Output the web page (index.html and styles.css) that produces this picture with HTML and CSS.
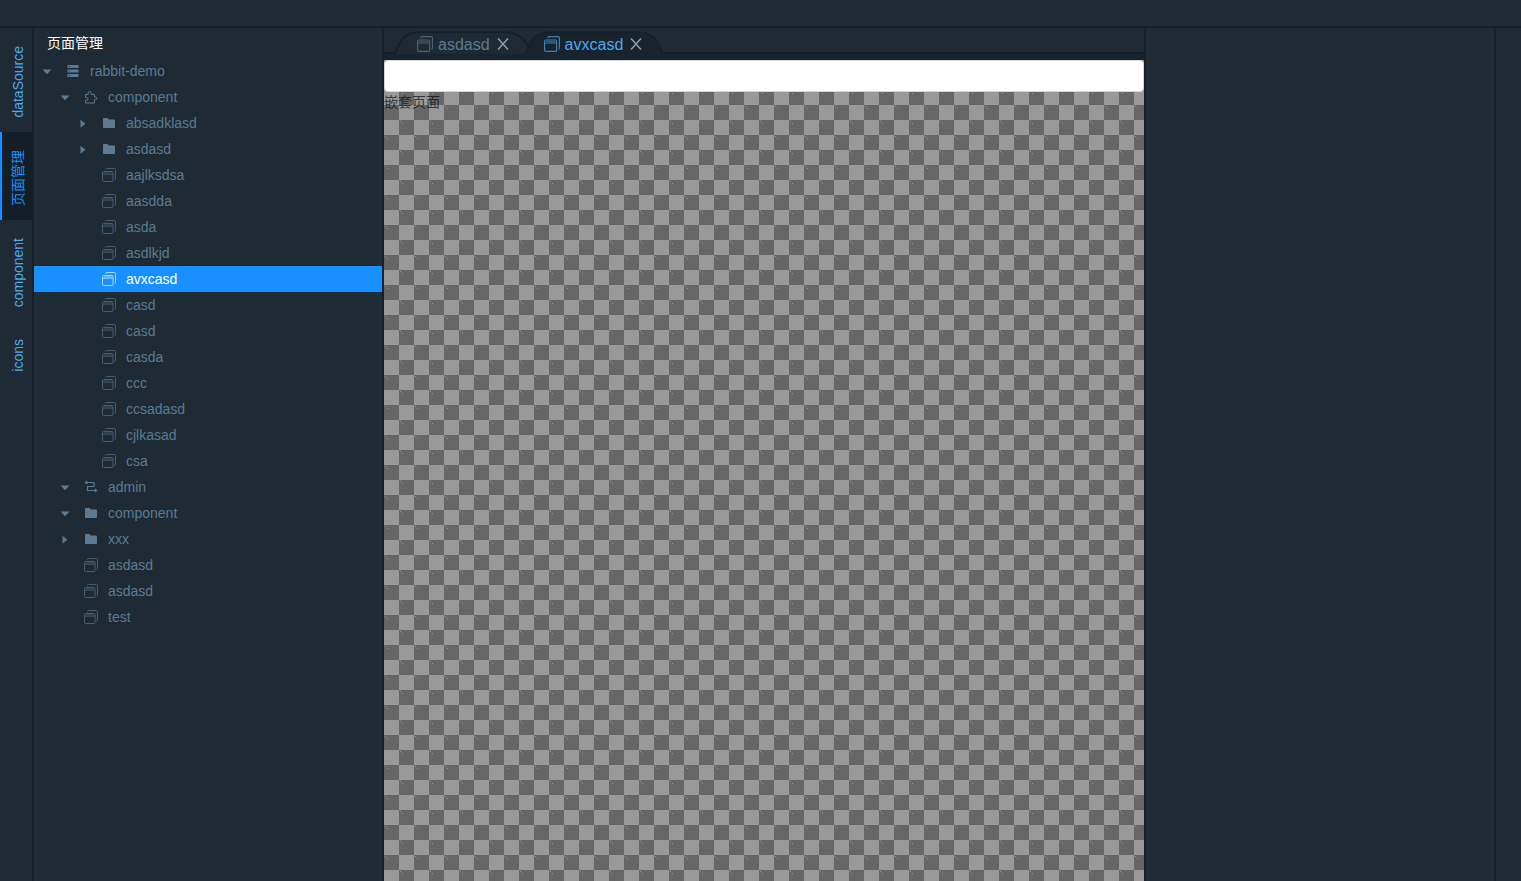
FILE: index.html
```html
<!DOCTYPE html>
<html lang="zh">
<head>
<meta charset="utf-8">
<title>页面管理</title>
<link rel="stylesheet" href="styles.css">
</head>
<body>
<svg class="defs" width="0" height="0">
  <symbol id="page" viewBox="0 0 14 14"><g fill="none" stroke="currentColor"><rect x=".5" y="3.5" width="10.5" height="10" rx="1"/><path d="M.5 6.1H11M3.5 2V1.4Q3.5.5 4.5.5H12.5Q13.5.5 13.5 1.5V10.5Q13.5 11.5 12.500 11.500"/><path d="M2 4.8h8" stroke-width=".6"/></g></symbol>
  <symbol id="folder" viewBox="0 0 14 14"><path fill="currentColor" d="M1 3q0-1 1-1h3.5L7 3.500h5q1 0 1 1V11q0 1-1 1H2q-1 0-1-1z"/></symbol>
  <symbol id="server" viewBox="0 0 14 14"><path fill="currentColor" fill-rule="evenodd" d="M1.5 1h11v3h-11zM3 2v1h1V2zM1.500 5.500h11v3h-11zM3 6.500v1h1v-1zM1.500 10h11v3h-11zM3 11v1h1v-1z"/></symbol>
  <symbol id="puzzle" viewBox="0 0 14 14"><path fill="none" stroke="currentColor" d="M1.500 4.500H4.200V3a1.500 1.500 0 0 1 3 0V4.500H10.500V7h1a1.300 1.300 0 0 1 0 2.600h-1v3.400H1.500V10.300H2.700a1.300 1.300 0 0 0 0-2.700H1.500z"/></symbol>
  <symbol id="flow" viewBox="0 0 14 14"><g fill="none" stroke="currentColor" stroke-width="1.200"><circle cx="2.500" cy="2.500" r="1"/><path d="M3.500 2.500h6.500v4H3.500v4H11.500M10.800 9L12.500 10.500l-1.700 1.500"/></g></symbol>
  <symbol id="down" viewBox="0 0 14 14"><path fill="currentColor" d="M2.500 5.500h9L7 10.200z"/></symbol>
  <symbol id="right" viewBox="0 0 14 14"><path fill="currentColor" d="M4.500 3.700v8L9.500 7.700z"/></symbol>
</svg>
<div class="app">
  <header class="topbar"></header>
  <main class="workspace">
    <nav class="rail">
      <div class="rail-tab"><span>dataSource</span></div>
      <div class="rail-tab active"><span>页面管理</span></div>
      <div class="rail-tab"><span>component</span></div>
      <div class="rail-tab"><span>icons</span></div>
    </nav>
    <aside class="explorer">
      <h1 class="title">页面管理</h1>
      <div class="tree" id="tree"></div>
    </aside>
    <section class="editor">
      <div class="tabs">
        <svg class="tab-shapes" width="760" height="32">
          <path class="baseline" d="M0 25H12M278 25H760"/>
          <path class="strip" d="M0 26H760V32H0z"/>
          <path class="tab-idle" d="M11 25.500C14 21 16 4 37 4H120C141 4 145 21 148 25.500"/>
          <path class="tab-current" d="M141.500 26C145 19 147 4 168 4H252C273 4 276 19 279 26"/>
        </svg>
        <div class="tab"><svg class="tab-icon"><use href="#page"/></svg><span>asdasd</span><svg class="close" viewBox="0 0 12 12"><path d="M1 .5l10 11M11 .5L1 11.500"/></svg></div>
        <div class="tab current"><svg class="tab-icon"><use href="#page"/></svg><span>avxcasd</span><svg class="close" viewBox="0 0 12 12"><path d="M1 .5l10 11M11 .5L1 11.500"/></svg></div>
      </div>
      <div class="canvas">
        <input class="field" type="text">
        <div class="nested">嵌套页面</div>
      </div>
    </section>
    <aside class="inspector"></aside>
    <div class="right-rail"></div>
  </main>
</div>
<script src="tree.js"></script>
</body>
</html>
```
FILE: styles.css
```css
* { box-sizing: border-box; }
body { margin: 0; background: #1e2b35; font: 14px/20px "Liberation Sans", "Noto Sans CJK SC", sans-serif; color: #5c7a91; overflow: hidden; }
svg { flex: none; display: block; }
.defs { position: absolute; }
.app { height: 100vh; display: flex; flex-direction: column; }
.topbar { height: 28px; flex: none; border-bottom: 2px solid #151f27; }
.workspace { flex: 1; min-height: 0; display: flex; }
.rail { width: 34px; flex: none; border-right: 2px solid #151f27; }
.rail-tab { display: flex; justify-content: center; padding: 18px 0 14px 2px; border-left: 2px solid transparent; color: #4fa8ee; }
.rail-tab span { writing-mode: vertical-rl; text-orientation: sideways; transform: rotate(180deg); }
.rail-tab.active { background: #141e26; border-left-color: #1890ff; color: #1890ff; }
.explorer { width: 350px; flex: none; border-right: 2px solid #151f27; }
.title { margin: 0; height: 30px; padding: 5px 13px; font-size: 14px; font-weight: 400; line-height: 20px; color: #fff; }
.row { height: 26px; display: flex; align-items: center; }
.row.level-1 { padding-left: 6px; }
.row.level-2 { padding-left: 24px; }
.row.level-3 { padding-left: 42px; }
.row svg { width: 14px; height: 14px; }
.row .icon { margin: 0 10px 0 12px; }
.row .icon.page { opacity: .65; }
.row.selected { background: #1890ff; color: #fff; }
.editor { width: 762px; flex: none; display: flex; flex-direction: column; border-right: 2px solid #151f27; }
.tabs { height: 32px; flex: none; display: flex; position: relative; padding-left: 33px; font-size: 16px; }
.tab-shapes { position: absolute; left: 0; top: 0; }
.baseline { stroke: #151f27; stroke-width: 2; }
.strip { fill: #18242d; }
.tab-idle { fill: #1e2b35; stroke: #151f27; stroke-width: 2; }
.tab-current { fill: #18242d; stroke: #151f27; stroke-width: 2; }
.tab { position: relative; height: 32px; display: flex; align-items: center; margin-right: 35px; }
.tab span { padding-top: 1px; }
.tab.current { color: #4fa8ee; }
.tab-icon { width: 16px; height: 16px; margin-right: 5px; opacity: .7; }
.close { width: 12px; height: 12px; margin-left: 7px; fill: none; stroke: #8da3b3; stroke-width: 1.4; }
.canvas { flex: 1; background: url("data:image/svg+xml,%3Csvg xmlns='http://www.w3.org/2000/svg' width='30' height='30'%3E%3Cpath fill='%23999' d='M0 0h30v30H0z'/%3E%3Cpath fill='%23666' d='M15 0h15v15H15zM0 15h15v15H0z'/%3E%3Cpath fill='%23999' d='M16 1h1v1h-1zM18 3h1v1h-1zM1 16h1v1H1zM3 18h1v1H3z'/%3E%3C/svg%3E"); }
.field { display: block; width: 100%; height: 32px; border: 1px solid #d9d9d9; border-radius: 4px; background: #fff; }
.nested { color: rgba(0, 0, 0, .65); }
.inspector { width: 350px; flex: none; border-right: 2px solid #151f27; }
.right-rail { flex: 1; }
```
FILE: tree.js
```js
const rows = [
  [1, 'down', 'server', 'rabbit-demo'],
  [2, 'down', 'puzzle', 'component'],
  [3, 'right', 'folder', 'absadklasd'],
  [3, 'right', 'folder', 'asdasd'],
  ...['aajlksdsa', 'aasdda', 'asda', 'asdlkjd', 'avxcasd', 'casd', 'casd', 'casda', 'ccc', 'ccsadasd', 'cjlkasad', 'csa'].map(name => [3, '', 'page', name]),
  [2, 'down', 'flow', 'admin'],
  [2, 'down', 'folder', 'component'],
  [2, 'right', 'folder', 'xxx'],
  [2, '', 'page', 'asdasd'],
  [2, '', 'page', 'asdasd'],
  [2, '', 'page', 'test']
];
document.getElementById('tree').innerHTML = rows.map(([level, caret, icon, name]) =>
  `<div class="row level-${level}${name === 'avxcasd' ? ' selected' : ''}"><svg>${caret ? `<use href="#${caret}"/>` : ''}</svg><svg class="icon ${icon}"><use href="#${icon}"/></svg><span>${name}</span></div>`
).join('');
```
